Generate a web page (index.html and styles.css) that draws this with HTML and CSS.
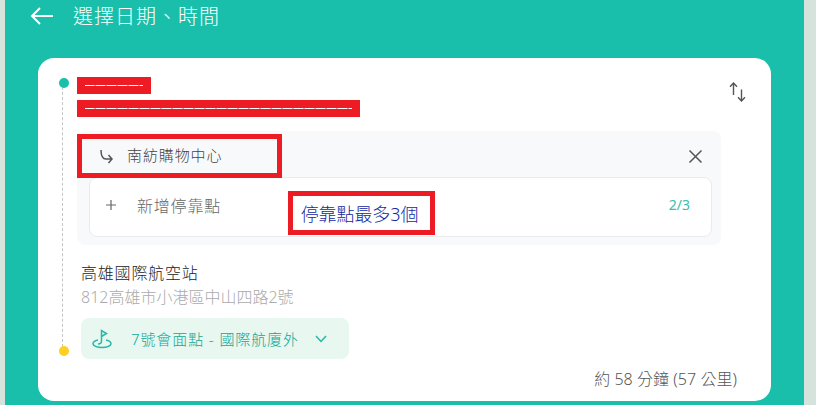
FILE: index.html
```html
<!DOCTYPE html>
<html>
<head>
  <title>選擇日期、時間</title>
  <link rel="stylesheet" href="styles.css">
</head>
<body>
  <div class="panel">
    <div class="header">
      <svg class="back-icon" width="24" height="20" viewBox="0 0 24 20"><path d="M23 10H2M10 2l-8 8 8 8" fill="none" stroke="#fff" stroke-width="2"/></svg>
      <span class="header-title">選擇日期、時間</span>
    </div>

    <div class="card">
      <div class="route">
        <div class="route-main">
          <span class="dot dot-start"></span>
          <span class="dot dot-end"></span>

          <div class="redacted redacted-short"><span></span></div>
          <div class="redacted redacted-long"><span></span></div>

          <div class="stops">
            <div class="stop-row">
              <div class="stop-name">
                <svg width="14" height="15" viewBox="0 0 14 15"><path d="M2 1c0 6 1 9 5 9h6M9.500 6l3.500 4-3.500 4" fill="none" stroke="#555" stroke-width="1.500"/></svg>
                <span>南紡購物中心</span>
              </div>
              <svg class="close-icon" width="15" height="15" viewBox="0 0 15 15"><path d="M1.500 1.500l12 12M13.500 1.500l-12 12" fill="none" stroke="#555" stroke-width="1.500"/></svg>
            </div>
            <div class="add-stop">
              <svg width="12" height="12" viewBox="0 0 12 12"><path d="M6 1v10M1 6h10" fill="none" stroke="#666" stroke-width="1.200"/></svg>
              <span class="add-label">新增停靠點</span>
              <span class="stop-count">2/3</span>
              <div class="stop-note">停靠點最多3個</div>
            </div>
          </div>

          <div class="dest-name">高雄國際航空站</div>
          <div class="dest-addr">812高雄市小港區中山四路2號</div>

          <div class="meet-chip">
            <svg width="20" height="20" viewBox="0 0 20 20"><path d="M9.500 12V1.500l5 3-5 3" fill="none" stroke="#25b9a6" stroke-width="1.500"/><path d="M6 11C3 11.700 1 13 1 14.700c0 2.100 4 3.800 9 3.800s9-1.700 9-3.800c0-1.700-2-3-5-3.700" fill="none" stroke="#25b9a6" stroke-width="1.500"/><path d="M9.500 12c0 2-1.500 3-3.500 3" fill="none" stroke="#25b9a6" stroke-width="1.500"/></svg>
            <span class="meet-label">7號會面點 - 國際航廈外</span>
            <svg width="12" height="8" viewBox="0 0 12 8"><path d="M1 1l5 5.500L11 1" fill="none" stroke="#25b9a6" stroke-width="1.500"/></svg>
          </div>
        </div>

        <svg class="swap-icon" width="18" height="20" viewBox="0 0 18 20"><path d="M4.500 13V1M1 4.800L4.500 1 8 4.800M12.500 7.500V19M9 15.200l3.500 3.800 3.500-3.800" fill="none" stroke="#555" stroke-width="1.400"/></svg>
      </div>

      <div class="eta">約 58 分鐘 (57 公里)</div>
    </div>
  </div>
</body>
</html>
```

FILE: styles.css
```css
body {
  margin: 0;
  height: 405px;
  overflow: hidden;
  background-color: #d6e3dc;
  font-family: "Noto Sans", "Noto Sans CJK TC", sans-serif;
  font-weight: 300;
}
.panel {
  margin: 0 12px 0 5px;
  height: 405px;
  background-color: #19bfaa;
  overflow: hidden;
}
.header {
  height: 58px;
  padding: 0 0 27px 25px;
  box-sizing: border-box;
  display: flex;
  align-items: center;
  gap: 19px;
}
.header-title {
  color: #fff;
  font-size: 20px;
  letter-spacing: 1px;
}
.card {
  margin: 0 33px;
  height: 343px;
  box-sizing: border-box;
  padding: 19px 24px 0 39px;
  background: #fff;
  border-radius: 16px;
}
.route {
  display: flex;
  gap: 8px;
  align-items: flex-start;
}
.route-main {
  position: relative;
  width: 644px;
}
.route-main::before {
  content: "";
  position: absolute;
  left: -15px;
  top: 10px;
  height: 260px;
  border-left: 1px dashed #c4c4c4;
}
.dot {
  position: absolute;
  left: -18px;
  width: 10px;
  height: 10px;
  border-radius: 50%;
}
.dot-start {
  top: 1px;
  background: #19bfaa;
}
.dot-end {
  top: 269px;
  background: #fdd023;
}
.swap-icon {
  margin-top: 5px;
}
.redacted {
  height: 17px;
  margin-bottom: 6px;
  padding: 0 8px;
  box-sizing: border-box;
  background: #ed1c24;
  display: flex;
  align-items: center;
}
.redacted span {
  display: block;
  width: 100%;
  height: 1px;
  background: repeating-linear-gradient(90deg, #fff 0, #fff 9px, #f59a9e 9px, #f59a9e 11px);
}
.redacted-short {
  width: 74px;
}
.redacted-long {
  width: 283px;
}
.stops {
  margin-top: 14px;
  padding: 3px 9px 8px 0;
  background: #f8f9fb;
  border-radius: 8px;
}
.stop-row {
  display: flex;
  align-items: center;
  justify-content: space-between;
  margin-bottom: -1px;
}
.stop-name {
  width: 205px;
  height: 44px;
  box-sizing: border-box;
  border: 5px solid #ed1c24;
  padding: 0 0 4px 17px;
  display: flex;
  align-items: center;
  gap: 14px;
  position: relative;
  z-index: 1;
  font-size: 15px;
  letter-spacing: 0.9px;
  color: #444;
}
.stop-name svg {
  margin-top: 4px;
}
.close-icon {
  margin-right: 9px;
}
.add-stop {
  position: relative;
  margin-left: 12px;
  height: 60px;
  box-sizing: border-box;
  padding: 0 21px 5px 15px;
  background: #fff;
  border: 1px solid #e9ebee;
  border-radius: 8px;
  display: flex;
  align-items: center;
  gap: 20px;
  color: #666;
}
.add-label {
  flex: 1;
  font-size: 16px;
  letter-spacing: 0.8px;
}
.stop-count {
  font-size: 14px;
  font-weight: 400;
  color: #38bdae;
}
.stop-note {
  position: absolute;
  left: 198px;
  top: 13px;
  width: 147px;
  height: 44px;
  box-sizing: border-box;
  border: 5px solid #ed1c24;
  padding-right: 4px;
  background: #fff;
  display: flex;
  align-items: center;
  justify-content: center;
  font-size: 18px;
  letter-spacing: -0.1px;
  color: #12299f;
}
.dest-name {
  margin: 16px 0 0 4px;
  line-height: 24px;
  font-size: 16px;
  letter-spacing: 0.8px;
  color: #222;
}
.dest-addr {
  margin-left: 4px;
  line-height: 24px;
  font-size: 16px;
  color: #aaa;
}
.meet-chip {
  margin: 9px 0 0 4px;
  width: 268px;
  height: 41px;
  box-sizing: border-box;
  padding: 0 22px 0 11px;
  background: #e8f7f0;
  border-radius: 8px;
  display: flex;
  align-items: center;
  gap: 19px;
  color: #12a893;
}
.meet-chip svg {
  flex: none;
}
.meet-label {
  flex: 1;
  margin-right: -4px;
  font-size: 15px;
  letter-spacing: 0.9px;
  white-space: nowrap;
}
.eta {
  margin-top: 8px;
  padding-right: 10px;
  line-height: 24px;
  font-size: 16px;
  letter-spacing: 0.05px;
  text-align: right;
  color: #555;
}
```
